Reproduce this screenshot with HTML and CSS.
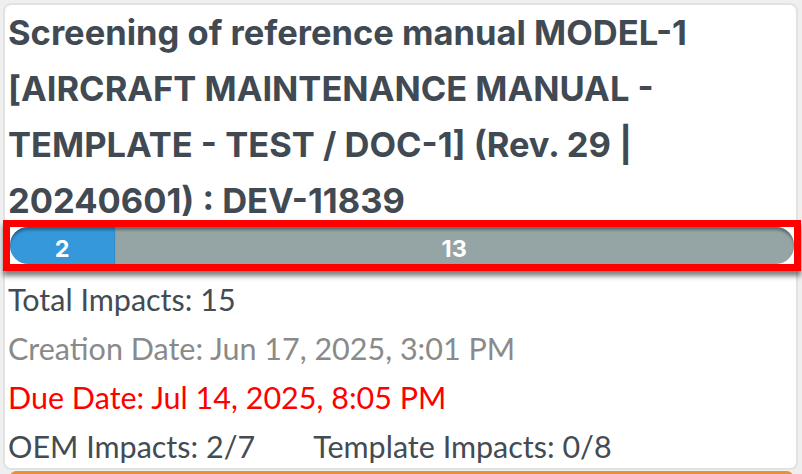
FILE: index.html
```html
<!DOCTYPE html>
<html lang="en">
<head>
<meta charset="utf-8">
<title>Screening card</title>
<link rel="stylesheet" href="styles.css">
</head>
<body>
<div class="card">
  <h2 class="card-title">Screening of reference manual MODEL-1 [AIRCRAFT MAINTENANCE MANUAL - TEMPLATE - TEST / DOC-1] (Rev. 29 | 20240601) : DEV-11839</h2>
  <div class="progress-wrap">
    <div class="progress">
      <div class="bar bar-done" style="width: 13.333%">2</div>
      <div class="bar bar-rest" style="width: 86.667%">13</div>
    </div>
  </div>
  <div class="meta">
    <div class="meta-line total">Total Impacts: 15</div>
    <div class="meta-line created">Creation Date: Jun 17, 2025, 3:01 PM</div>
    <div class="meta-line due">Due Date: Jul 14, 2025, 8:05 PM</div>
    <div class="meta-line counts">
      <span>OEM Impacts: 2/7</span>
      <span>Template Impacts: 0/8</span>
    </div>
  </div>
</div>
<div class="next-card"></div>
</body>
</html>
```
FILE: styles.css
```css
html, body {
  margin: 0;
  padding: 0;
}
body {
  background: #efefef;
  font-family: Lato, "Open Sans", sans-serif;
  width: 802px;
  height: 474px;
  overflow: hidden;
}
.card {
  margin: 3px 4px 0 3px;
  background: #fff;
  border: 2px solid #e2e2e2;
  border-radius: 8px;
  height: 467px;
  box-sizing: border-box;
}
.card-title {
  margin: 0;
  padding: 0 6px 0 3px;
  font-family: Inter, "Open Sans", sans-serif;
  font-size: 34.5px;
  font-weight: 700;
  line-height: 56px;
  color: #414a52;
}
.progress-wrap {
  position: relative;
  margin: -2px 2px 0 5px;
}
.progress-wrap::after {
  content: "";
  position: absolute;
  inset: -7px;
  border: 7px solid #ff0000;
  box-shadow: 0 5px 5px rgba(0, 0, 0, 0.5);
  pointer-events: none;
}
.progress {
  display: flex;
  height: 37px;
  border-radius: 18px;
  background: #d9d9d9;
  overflow: hidden;
  box-shadow: inset 0 4px 4px rgba(0, 0, 0, 0.45);
}
.bar {
  display: flex;
  align-items: center;
  justify-content: center;
  padding-top: 5px;
  box-sizing: border-box;
  color: #fff;
  font-family: Inter, "Open Sans", sans-serif;
  font-weight: 700;
  font-size: 23.5px;
  box-shadow: inset 0 4px 3px -1px rgba(0, 0, 0, 0.35);
}
.bar-done {
  background: #3498db;
  border-radius: 18px 0 0 18px;
}
.bar-rest {
  background: #95a5a6;
  border-radius: 0 18px 18px 0;
}
.meta {
  padding: 11px 0 0 3px;
}
.meta-line {
  font-size: 30.5px;
  line-height: 49px;
  color: #434b53;
}
.created {
  color: #8a8a8a;
}
.due {
  color: #ff0000;
}
.counts {
  display: flex;
  gap: 58px;
}
.next-card {
  margin: 1px 9px 0 10px;
  border-top: 3px solid #e4913a;
  border-radius: 6px 6px 0 0;
  height: 4px;
}
```
